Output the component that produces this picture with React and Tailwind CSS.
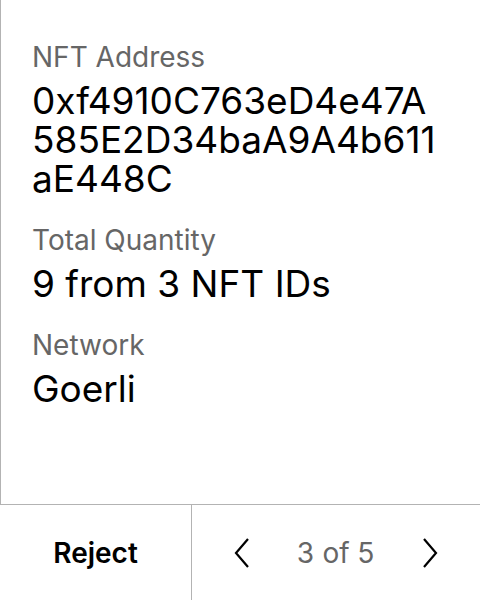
import React from "react";

function Field({ label, children }) {
  return (
    <div className="flex flex-col gap-[7px]">
      <div className="text-[28px] leading-[34px] text-[#666666]">{label}</div>
      <div className="text-[37px] leading-[39px] text-black break-all">{children}</div>
    </div>
  );
}

export default function App() {
  return (
    <div
      className="w-[480px] h-[600px] bg-white flex flex-col"
      style={{ fontFamily: "Inter, 'Noto Sans', sans-serif" }}
    >
      <div className="flex-1 border-l border-[#b3b3b3] pl-[31px] pr-[36px] pt-[40px] flex flex-col gap-[25px]">
        <Field label="NFT Address">0xf4910C763eD4e47A585E2D34baA9A4b611aE448C</Field>
        <Field label="Total Quantity">9 from 3 NFT IDs</Field>
        <Field label="Network">Goerli</Field>
      </div>
      <div className="h-[96px] border-t border-[#b3b3b3] flex">
        <div className="w-[192px] border-r border-[#b3b3b3] flex items-center justify-center">
          <span className="text-[28px] font-semibold text-black">Reject</span>
        </div>
        <div className="flex-1 flex items-center justify-between px-[41px]">
          <svg width="18" height="32" viewBox="0 0 18 32" fill="none" stroke="black" strokeWidth="2.2">
            <path d="M15 2 L3 16 L15 30" />
          </svg>
          <span className="text-[28px] text-[#666666] tabular-nums">3 of 5</span>
          <svg width="18" height="32" viewBox="0 0 18 32" fill="none" stroke="black" strokeWidth="2.2">
            <path d="M3 2 L15 16 L3 30" />
          </svg>
        </div>
      </div>
    </div>
  );
}
